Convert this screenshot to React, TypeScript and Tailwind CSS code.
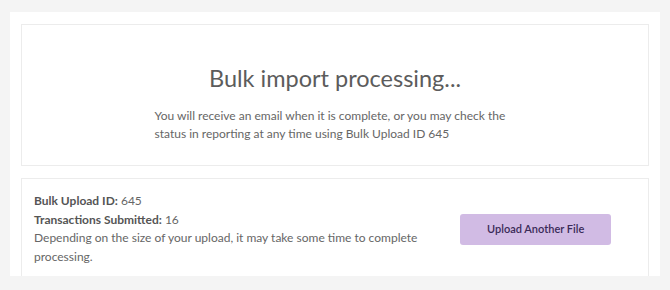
import React from 'react';

const App = () => {
  return (
    <div className="min-h-[290px] w-[670px] bg-[#f4f4f4] px-[10px] pt-[12px] font-['Lato','Liberation_Sans',sans-serif]">
      <div className="h-[264px] overflow-hidden bg-white px-[11px] pt-[12px]">
        <div className="flex h-[142px] flex-col items-center border border-[#ececec] pt-[39px]">
          <h1 className="text-[23.5px] leading-[28px] text-[#5c5c5c]">Bulk import processing...</h1>
          <p className="mt-[15px] w-[361px] text-[12px] leading-[18px] text-[#666]">
            You will receive an email when it is complete, or you may check the status in reporting at any time using
            Bulk Upload ID 645
          </p>
        </div>
        <div className="mt-[12px] grid grid-cols-3 items-center border border-[#ececec] px-[12px] pt-[13px] pb-[12px] text-[12px] leading-[18.5px] text-[#666]">
          <div className="col-span-2">
            <p>
              <span className="font-bold text-[#555]">Bulk Upload ID:</span> 645
            </p>
            <p>
              <span className="font-bold text-[#555]">Transactions Submitted:</span> 16
            </p>
            <p className="pr-[12px]">
              Depending on the size of your upload, it may take some time to complete processing.
            </p>
          </div>
          <div className="flex justify-center">
            <button className="h-[31px] w-[151px] rounded-[3px] bg-[#d1bbe4] text-[11px] font-semibold text-[#3a2a58]">
              Upload Another File
            </button>
          </div>
        </div>
      </div>
    </div>
  );
};

export default App;
